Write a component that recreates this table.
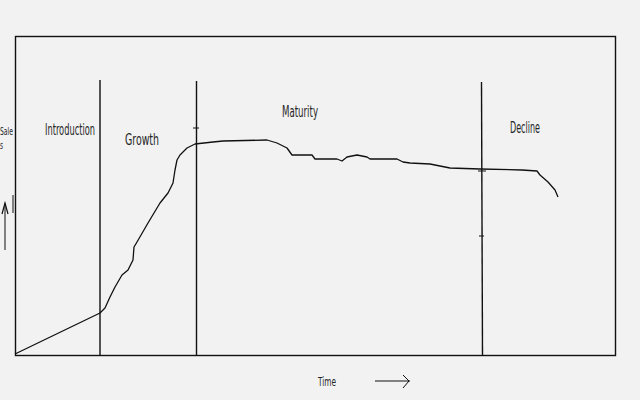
import React from "react";

const curve = [
  [15, 354], [100, 313], [105, 308], [110, 297], [115, 287], [122, 275], [128, 270],
  [133, 260], [134, 247], [137, 242], [148, 223], [160, 203], [168, 193], [173, 183],
  [175, 170], [177, 160], [180, 155], [187, 148], [195, 144], [213, 142], [223, 141],
  [267, 140], [277, 143], [287, 148], [292, 155], [312, 155], [315, 159], [337, 159],
  [342, 161], [347, 157], [357, 155], [367, 157], [370, 159], [397, 159], [403, 162],
  [410, 163], [430, 164], [450, 168], [480, 169], [522, 170], [537, 171], [540, 175],
  [548, 182], [555, 190], [558, 197],
];

const font = '"Liberation Sans Narrow", "DejaVu Sans Condensed", "Liberation Sans", sans-serif';

function Label({ x, y, w, size = 16, children }) {
  return (
    <text
      x={x}
      y={y}
      fontSize={size}
      textLength={w}
      lengthAdjust="spacingAndGlyphs"
      fill="#262626"
      style={{ fontFamily: font }}
    >
      {children}
    </text>
  );
}

export default function App() {
  const d = curve.map((p, i) => `${i ? "L" : "M"}${p[0]} ${p[1]}`).join(" ");
  return (
    <div className="w-[640px] h-[400px] bg-[#f2f2f2] overflow-hidden">
      <svg width="640" height="400" viewBox="0 0 640 400" className="block">
        <g stroke="#111" strokeWidth="1.4" fill="none">
          <rect x="15.5" y="36.5" width="600" height="319" />
          <line x1="100" y1="80" x2="100" y2="355" />
          <line x1="196.5" y1="81" x2="196.5" y2="355" />
          <line x1="481.5" y1="82" x2="482.5" y2="355" />
          <path d={d} strokeWidth="1.3" strokeLinejoin="round" />
          <line x1="193" y1="128" x2="199" y2="128" strokeWidth="1" />
          <line x1="479" y1="236" x2="484" y2="236" strokeWidth="1" />
          <line x1="478" y1="171" x2="486" y2="171" strokeWidth="1" />
          <line x1="5" y1="250" x2="5" y2="203" strokeWidth="1" />
          <path d="M2 214 L5 203 L8 214" strokeWidth="1.2" />
          <line x1="13" y1="195" x2="13" y2="213" strokeWidth="1" />
          <line x1="375" y1="381" x2="410" y2="381" strokeWidth="1" />
          <path d="M403 375 L409 381 L403 388" strokeWidth="1" />
        </g>
        <Label x={45} y={135} w={50}>Introduction</Label>
        <Label x={125} y={145} w={34}>Growth</Label>
        <Label x={282} y={117} w={36}>Maturity</Label>
        <Label x={510} y={133} w={30}>Decline</Label>
        <Label x={0} y={135} w={13} size={10}>Sale</Label>
        <Label x={0} y={149} w={3} size={10}>s</Label>
        <Label x={318} y={386} w={18} size={12}>Time</Label>
      </svg>
    </div>
  );
}
